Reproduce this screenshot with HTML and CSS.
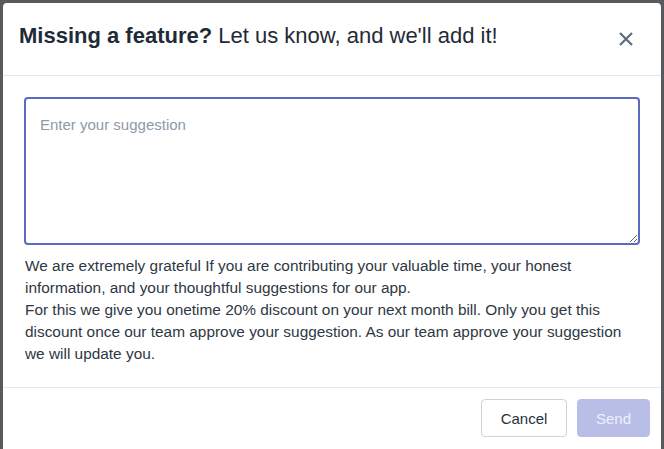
FILE: index.html
```html
<!DOCTYPE html>
<html>
<head>
<meta charset="utf-8">
<link rel="stylesheet" href="styles.css">
</head>
<body>
<div class="overlay">
  <div class="modal">
    <div class="modal-header">
      <h5 class="modal-title"><strong>Missing a feature?</strong> Let us know, and we'll add it!</h5>
      <button class="close" aria-label="Close">
        <svg width="14" height="14" viewBox="0 0 14 14"><path d="M1 1L13 13M13 1L1 13" stroke="#5d6d7e" stroke-width="2.2" stroke-linecap="butt"/></svg>
      </button>
    </div>
    <div class="modal-body">
      <textarea class="suggestion" placeholder="Enter your suggestion"></textarea>
      <p class="note">We are extremely grateful If you are contributing your valuable time, your honest information, and your thoughtful suggestions for our app.<br>For this we give you onetime 20% discount on your next month bill. Only you get this discount once our team approve your suggestion. As our team approve your suggestion we will update you.</p>
    </div>
    <div class="modal-footer">
      <button class="btn btn-cancel">Cancel</button>
      <button class="btn btn-send">Send</button>
    </div>
  </div>
</div>
</body>
</html>
```

FILE: styles.css
```css
html, body {
  margin: 0;
  padding: 0;
  height: 100%;
  overflow: hidden;
}
body {
  background: #585b5e;
  font-family: "Liberation Sans", Arial, sans-serif;
}
.overlay {
  padding: 3px 3px 0 3px;
}
.modal {
  width: 658px;
  height: 446px;
  background: #fff;
  border-radius: 4px 4px 0 0;
  display: flex;
  flex-direction: column;
  box-sizing: border-box;
}
.modal-header {
  display: flex;
  align-items: flex-start;
  justify-content: space-between;
  height: 73px;
  box-sizing: border-box;
  padding: 16px 28px 0 16px;
  border-bottom: 1px solid #e3e6e9;
}
.modal-title {
  margin: 0;
  font-size: 22px;
  line-height: 33px;
  font-weight: normal;
  color: #1f2b37;
}
.modal-title strong {
  font-weight: bold;
}
.close {
  border: 0;
  background: transparent;
  padding: 0;
  margin-top: 13px;
  width: 14px;
  height: 14px;
  display: block;
  cursor: pointer;
}
.close svg {
  display: block;
}
.modal-body {
  padding: 21px 21px 0 21px;
  height: 312px;
  box-sizing: border-box;
  border-bottom: 1px solid #e6e9ec;
}
.suggestion {
  display: block;
  width: 616px;
  height: 148px;
  box-sizing: border-box;
  border: 2px solid #5b6bc0;
  border-radius: 4px;
  padding: 15px 14px;
  font-family: "Liberation Sans", Arial, sans-serif;
  font-size: 15px;
  line-height: 22px;
  color: #2b3640;
  outline: none;
  resize: vertical;
  margin: 0 0 10px 0;
}
.suggestion::placeholder {
  color: #8d9aa7;
}
.note {
  margin: 0;
  font-size: 15.4px;
  line-height: 22px;
  color: #2e3843;
  padding-left: 1px;
}
.modal-footer {
  display: flex;
  justify-content: flex-end;
  gap: 10px;
  padding: 11px 11px 0 0;
}
.btn {
  height: 38px;
  box-sizing: border-box;
  border-radius: 4px;
  font-family: "Liberation Sans", Arial, sans-serif;
  font-size: 15px;
  padding: 0 18px;
}
.btn-cancel {
  width: 86px;
  background: #fff;
  border: 1px solid #cdd4da;
  color: #26313b;
}
.btn-send {
  width: 73px;
  background: #b8bee6;
  border: 1px solid #b8bee6;
  color: #eef0fb;
}
```
